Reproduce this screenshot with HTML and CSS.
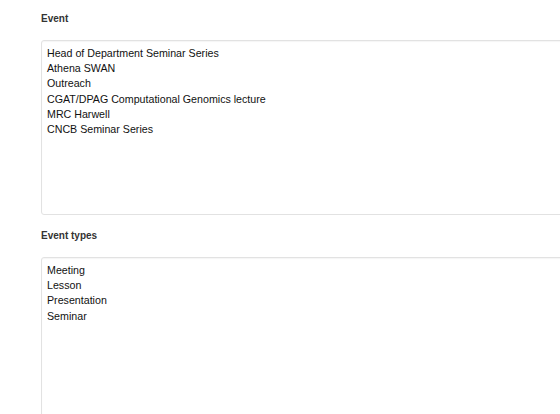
FILE: index.html
```html
<!DOCTYPE html>
<html>
<head>
<meta charset="utf-8">
<link rel="stylesheet" href="styles.css">
</head>
<body>
<div class="page">
  <div class="field">
    <div class="label">Event</div>
    <div class="listbox">
      <div class="opt">Head of Department Seminar Series</div>
      <div class="opt">Athena SWAN</div>
      <div class="opt">Outreach</div>
      <div class="opt">CGAT/DPAG Computational Genomics lecture</div>
      <div class="opt">MRC Harwell</div>
      <div class="opt">CNCB Seminar Series</div>
    </div>
  </div>
  <div class="field">
    <div class="label">Event types</div>
    <div class="listbox">
      <div class="opt">Meeting</div>
      <div class="opt">Lesson</div>
      <div class="opt">Presentation</div>
      <div class="opt">Seminar</div>
    </div>
  </div>
</div>
</body>
</html>
```

FILE: styles.css
```css
html, body {
  margin: 0;
  padding: 0;
  background: #fff;
  overflow: hidden;
}
.page {
  width: 560px;
  height: 414px;
  overflow: hidden;
  padding: 13px 0 0 41px;
  box-sizing: border-box;
  font-family: "Liberation Sans", Arial, sans-serif;
  color: #222;
}
.field {
  display: flex;
  flex-direction: column;
  margin-bottom: 15px;
}
.label {
  font-size: 10px;
  font-weight: bold;
  line-height: 12px;
  color: #333;
  margin-bottom: 15px;
}
.listbox {
  width: 600px;
  height: 175px;
  box-sizing: border-box;
  border: 1px solid #e2e2e2;
  border-radius: 3px;
  box-shadow: inset 0 1px 1px rgba(0,0,0,0.04);
  padding: 5px 5px;
}
.opt {
  font-size: 10.67px;
  line-height: 15.2px;
  color: #111;
}
```
